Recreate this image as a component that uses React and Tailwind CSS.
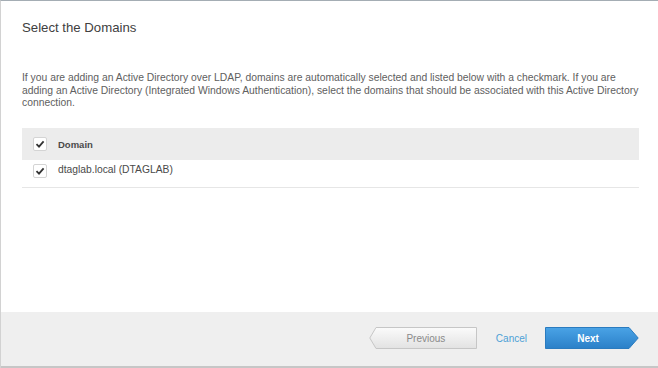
import React from "react"

function CheckBox() {
  return (
    <span className="flex h-[14px] w-[14px] shrink-0 items-center justify-center rounded-[2px] border border-[#d4d4d4] bg-white">
      <svg width="10" height="10" viewBox="0 0 10 10">
        <path d="M1.5 5.2 L4 7.6 L8.6 2.4" fill="none" stroke="#333" strokeWidth="1.8" />
      </svg>
    </span>
  )
}

function PrevButton() {
  return (
    <button className="relative flex h-[22px] w-[108px] items-center justify-center pl-[6px] text-[10px] text-[#8a8a8a]">
      <svg className="absolute inset-0" width="108" height="22" viewBox="0 0 108 22">
        <defs>
          <linearGradient id="pg" x1="0" y1="0" x2="0" y2="1">
            <stop offset="0" stopColor="#fbfbfb" />
            <stop offset="1" stopColor="#e2e2e2" />
          </linearGradient>
        </defs>
        <path d="M7 0.5 H107.5 V21.5 H7 L0.8 11 Z" fill="url(#pg)" stroke="#c6c6c6" />
      </svg>
      <span className="relative">Previous</span>
    </button>
  )
}

function NextButton() {
  return (
    <button className="relative flex h-[22px] w-[94px] items-center justify-center pr-[8px] text-[10px] font-bold text-white">
      <svg className="absolute inset-0" width="94" height="22" viewBox="0 0 94 22">
        <defs>
          <linearGradient id="ng" x1="0" y1="0" x2="0" y2="1">
            <stop offset="0" stopColor="#4aa3e6" />
            <stop offset="1" stopColor="#2b80c8" />
          </linearGradient>
        </defs>
        <path d="M0.5 0.5 H84 L93.2 11 L84 21.5 H0.5 Z" fill="url(#ng)" stroke="#2a7bbf" />
      </svg>
      <span className="relative">Next</span>
    </button>
  )
}

export default function App() {
  return (
    <div className="flex h-[368px] w-[658px] flex-col border-l border-t border-l-[#d2d2d2] border-t-[#a4adb4] bg-white font-['Liberation_Sans',Arial,sans-serif]">
      <div className="flex-1 px-[21px]">
        <h2 className="mt-[19px] text-[13.2px] leading-[16px] text-[#404040]">Select the Domains</h2>
        <p className="mt-[36px] w-[621px] text-[10.35px] leading-[12.5px] text-[#606060]">
          If you are adding an Active Directory over LDAP, domains are automatically selected and listed below with a checkmark. If you are adding an Active Directory (Integrated Windows Authentication), select the domains that should be associated with this Active Directory connection.
        </p>
        <div className="mt-[18px] w-[617px]">
          <div className="flex h-[32px] items-center gap-[11px] bg-[#ececec] pl-[11px]">
            <CheckBox />
            <span className="pt-[4px] text-[9.5px] font-bold text-[#4a4a4a]">Domain</span>
          </div>
          <div className="flex h-[28px] items-start gap-[11px] border-b border-[#e6e6e6] pl-[11px] pt-[4px]">
            <CheckBox />
            <span className="text-[10.3px] leading-[12px] text-[#4a4a4a]">dtaglab.local (DTAGLAB)</span>
          </div>
        </div>
      </div>
      <div className="flex h-[56px] items-center justify-end gap-0 border-b-2 border-[#c6c6c6] bg-[#efefef] pb-[2px] pr-[19px]">
        <PrevButton />
        <span className="ml-[19px] mr-[18px] text-[10px] text-[#4d9fd6]">Cancel</span>
        <NextButton />
      </div>
    </div>
  )
}
